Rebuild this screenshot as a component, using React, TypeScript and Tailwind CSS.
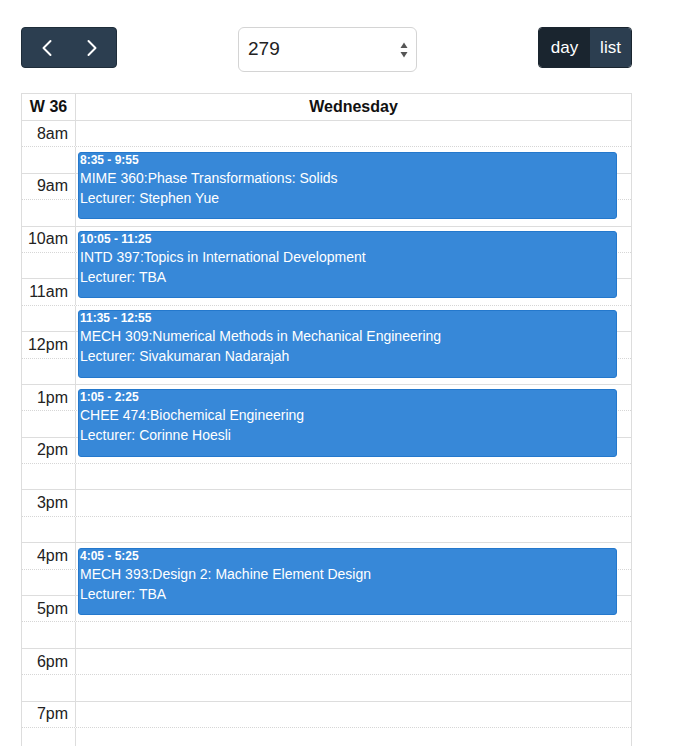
import { ChevronLeft, ChevronRight } from "lucide-react"

const HOUR = 52.8
const events = [
  { start: 35, time: "8:35 - 9:55", title: "MIME 360:Phase Transformations: Solids", lecturer: "Stephen Yue" },
  { start: 125, time: "10:05 - 11:25", title: "INTD 397:Topics in International Development", lecturer: "TBA" },
  { start: 215, time: "11:35 - 12:55", title: "MECH 309:Numerical Methods in Mechanical Engineering", lecturer: "Sivakumaran Nadarajah" },
  { start: 305, time: "1:05 - 2:25", title: "CHEE 474:Biochemical Engineering", lecturer: "Corinne Hoesli" },
  { start: 485, time: "4:05 - 5:25", title: "MECH 393:Design 2: Machine Element Design", lecturer: "TBA" },
]

// only the hours that fit in the window
const hours = ["8am", "9am", "10am", "11am", "12pm", "1pm", "2pm", "3pm", "4pm", "5pm", "6pm", "7pm"]

function SelectArrows() {
  return (
    <svg width="8" height="16" viewBox="0 0 8 16" className="text-[#555]">
      <polygon points="0.5,6 4,0.5 7.5,6" fill="currentColor" />
      <polygon points="0.5,10 7.5,10 4,15.5" fill="currentColor" />
    </svg>
  )
}

export default function App() {
  return (
    <div className="h-[746px] overflow-hidden bg-white font-['Liberation_Sans',Arial,sans-serif] text-[#222]">
      <div className="ml-[21px] w-[611px] pt-[27px]">
        {/* toolbar */}
        <div className="flex items-start justify-between mb-[21px]">
          <div className="flex h-[41px] w-[96px] rounded-[4px] border border-[#1f2d3a] bg-[#2c3e50] text-white">
            <button className="flex flex-1 items-center justify-center pl-[2px]">
              <ChevronLeft size={28} strokeWidth={1.7} />
            </button>
            <button className="flex flex-1 items-center justify-center pr-[2px]">
              <ChevronRight size={28} strokeWidth={1.7} />
            </button>
          </div>

          <div className="flex h-[45px] w-[179px] items-center justify-between rounded-[6px] border border-[#d4d4d4] bg-white pl-[9px] pr-[8px] text-[19px] text-[#222]">
            <span>279</span>
            <SelectArrows />
          </div>

          <div className="flex h-[41px] overflow-hidden rounded-[4px] border border-[#1a252f] text-[17px] text-white">
            <button className="flex w-[51px] items-center justify-center bg-[#1a252f]">day</button>
            <button className="flex w-[41px] items-center justify-center bg-[#2c3e50]">list</button>
          </div>
        </div>

        {/* agenda grid */}
        <div className="border border-[#ddd]">
          <div className="flex h-[27px] border-b border-[#ddd] font-bold text-[16px] text-[#111]">
            <div className="flex w-[54px] items-center justify-center border-r border-[#ddd]">W 36</div>
            <div className="flex flex-1 items-center justify-center">Wednesday</div>
          </div>

          <div className="relative">
            {hours.map((h) => (
              <div key={h}>
                <div className="flex h-[26.4px] border-b border-dotted border-[#d6d6d6]">
                  <div className="flex w-[54px] items-center justify-end border-r border-[#ddd] pr-[7px] text-[16px]">{h}</div>
                  <div className="flex-1" />
                </div>
                <div className="flex h-[26.4px] border-b border-[#ddd]">
                  <div className="w-[54px] border-r border-[#ddd]" />
                  <div className="flex-1" />
                </div>
              </div>
            ))}

            <div className="absolute inset-y-0 left-[54px] right-0">
              {events.map((e) => (
                <div
                  key={e.time}
                  className="absolute left-[2px] right-[14px] overflow-hidden rounded-[3px] border border-[#2478cc] bg-[#3788d8] pl-px text-white"
                  style={{ top: (e.start * HOUR) / 60, height: (80 * HOUR) / 60 - 3 }}
                >
                  <div className="text-[12px] font-bold leading-[15px]">{e.time}</div>
                  <div className="text-[14px] leading-[20px]">{e.title}</div>
                  <div className="text-[14px] leading-[20px]">Lecturer: {e.lecturer}</div>
                </div>
              ))}
            </div>
          </div>
        </div>
      </div>
    </div>
  )
}
